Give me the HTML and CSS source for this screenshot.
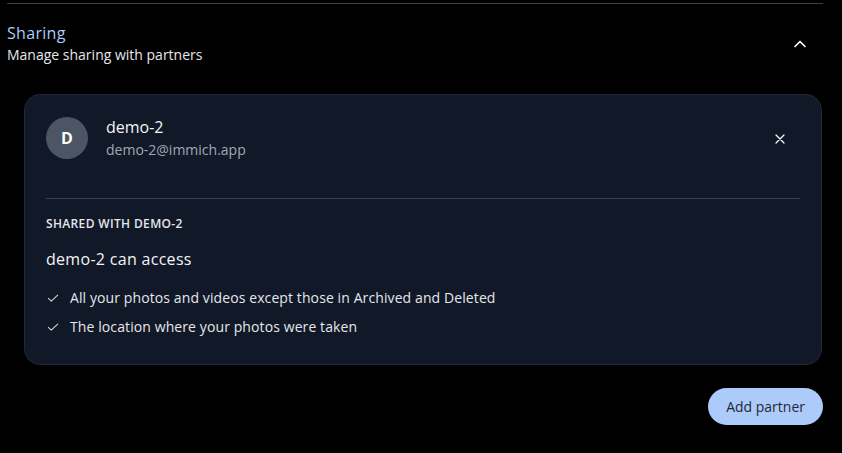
FILE: index.html
```html
<!DOCTYPE html>
<html lang="en">
<head>
<meta charset="utf-8">
<title>Sharing</title>
<link rel="stylesheet" href="styles.css">
</head>
<body>
<section class="section">
  <div class="section-head">
    <div class="titles">
      <div class="title">Sharing</div>
      <div class="subtitle">Manage sharing with partners</div>
    </div>
    <button class="chevron" aria-label="Collapse">
      <svg viewBox="0 0 24 24" width="20" height="20"><path d="M6 15l6-6 6 6" fill="none" stroke="#fff" stroke-width="2" stroke-linecap="round" stroke-linejoin="round"/></svg>
    </button>
  </div>
  <div class="card">
    <div class="user-row">
      <div class="avatar">D</div>
      <div class="user-info">
        <div class="user-name">demo-2</div>
        <div class="user-email">demo-2@immich.app</div>
      </div>
      <button class="close" aria-label="Remove">
        <svg viewBox="0 0 24 24" width="16" height="16"><path d="M6 6l12 12M18 6L6 18" fill="none" stroke="#fff" stroke-width="1.8" stroke-linecap="round"/></svg>
      </button>
    </div>
    <hr class="divider">
    <div class="shared-label">SHARED WITH DEMO-2</div>
    <div class="access-title">demo-2 can access</div>
    <ul class="access-list">
      <li><svg viewBox="0 0 24 24" width="14" height="14"><path d="M4 12.5l5 5L20 7" fill="none" stroke="#d1d5db" stroke-width="1.8" stroke-linecap="round" stroke-linejoin="round"/></svg><span>All your photos and videos except those in Archived and Deleted</span></li>
      <li><svg viewBox="0 0 24 24" width="14" height="14"><path d="M4 12.5l5 5L20 7" fill="none" stroke="#d1d5db" stroke-width="1.8" stroke-linecap="round" stroke-linejoin="round"/></svg><span>The location where your photos were taken</span></li>
    </ul>
  </div>
  <div class="actions">
    <button class="add-btn">Add partner</button>
  </div>
</section>
</body>
</html>
```
FILE: styles.css
```css
* { box-sizing: border-box; }
html, body { margin: 0; padding: 0; background: #000; }
body {
  font-family: "Open Sans", "Liberation Sans", sans-serif;
  color: #e5e7eb;
  width: 842px;
  height: 453px;
  overflow: hidden;
}
.section {
  margin: 3px 0 0 7px;
  width: 816px;
  border-top: 1px solid #3b3f46;
}
.section-head {
  display: flex;
  align-items: center;
  justify-content: space-between;
  padding-top: 17px;
}
.title {
  font-size: 16px;
  line-height: 24px;
  color: #adcbfa;
  font-weight: 500;
  letter-spacing: 0.3px;
}
.subtitle {
  font-size: 14px;
  line-height: 20px;
  color: #e5e7eb;
}
.chevron {
  background: none;
  border: 0;
  padding: 0;
  width: 20px;
  height: 20px;
  margin-right: 13px;
  margin-top: 2px;
  display: flex;
}
.card {
  margin: 29px 1px 0 17px;
  background: #111827;
  border: 1px solid #1f2937;
  border-radius: 16px;
  padding: 20px 21px 27px 21px;
}
.user-row {
  display: flex;
  align-items: center;
}
.avatar {
  width: 42px;
  height: 42px;
  border-radius: 50%;
  background: #4b5563;
  color: #fff;
  font-weight: 700;
  font-size: 16px;
  display: flex;
  align-items: center;
  justify-content: center;
}
.user-info {
  margin-left: 18px;
  flex: 1;
}
.user-name {
  font-size: 16px;
  line-height: 24px;
  color: #f3f4f6;
}
.user-email {
  font-size: 14px;
  line-height: 20px;
  margin-top: 1px;
  color: #a1a8b5;
}
.close {
  background: none;
  border: 0;
  padding: 0;
  width: 16px;
  height: 16px;
  margin-right: 12px;
  margin-top: 2px;
  display: flex;
}
.divider {
  border: 0;
  border-top: 1px solid #374151;
  margin: 38px 0 0 0;
}
.shared-label {
  margin-top: 17px;
  font-size: 12px;
  line-height: 16px;
  font-weight: 600;
  letter-spacing: 0.35px;
  color: #e5e7eb;
}
.access-title {
  margin-top: 15px;
  font-size: 16px;
  line-height: 24px;
  letter-spacing: 0.3px;
  color: #f3f4f6;
}
.access-list {
  list-style: none;
  margin: 17px 0 0 0;
  padding: 0;
  display: flex;
  flex-direction: column;
  gap: 9px;
}
.access-list li {
  display: flex;
  align-items: center;
  gap: 10px;
  font-size: 14px;
  line-height: 20px;
  letter-spacing: 0.1px;
  color: #e5e7eb;
}
.access-list svg { flex: none; }
.actions {
  display: flex;
  justify-content: flex-end;
  margin-top: 23px;
}
.add-btn {
  font-family: inherit;
  background: #adcbfa;
  color: #1f2937;
  border: 0;
  border-radius: 999px;
  height: 37px;
  padding: 0 18px;
  font-size: 14px;
  font-weight: 500;
}
```
